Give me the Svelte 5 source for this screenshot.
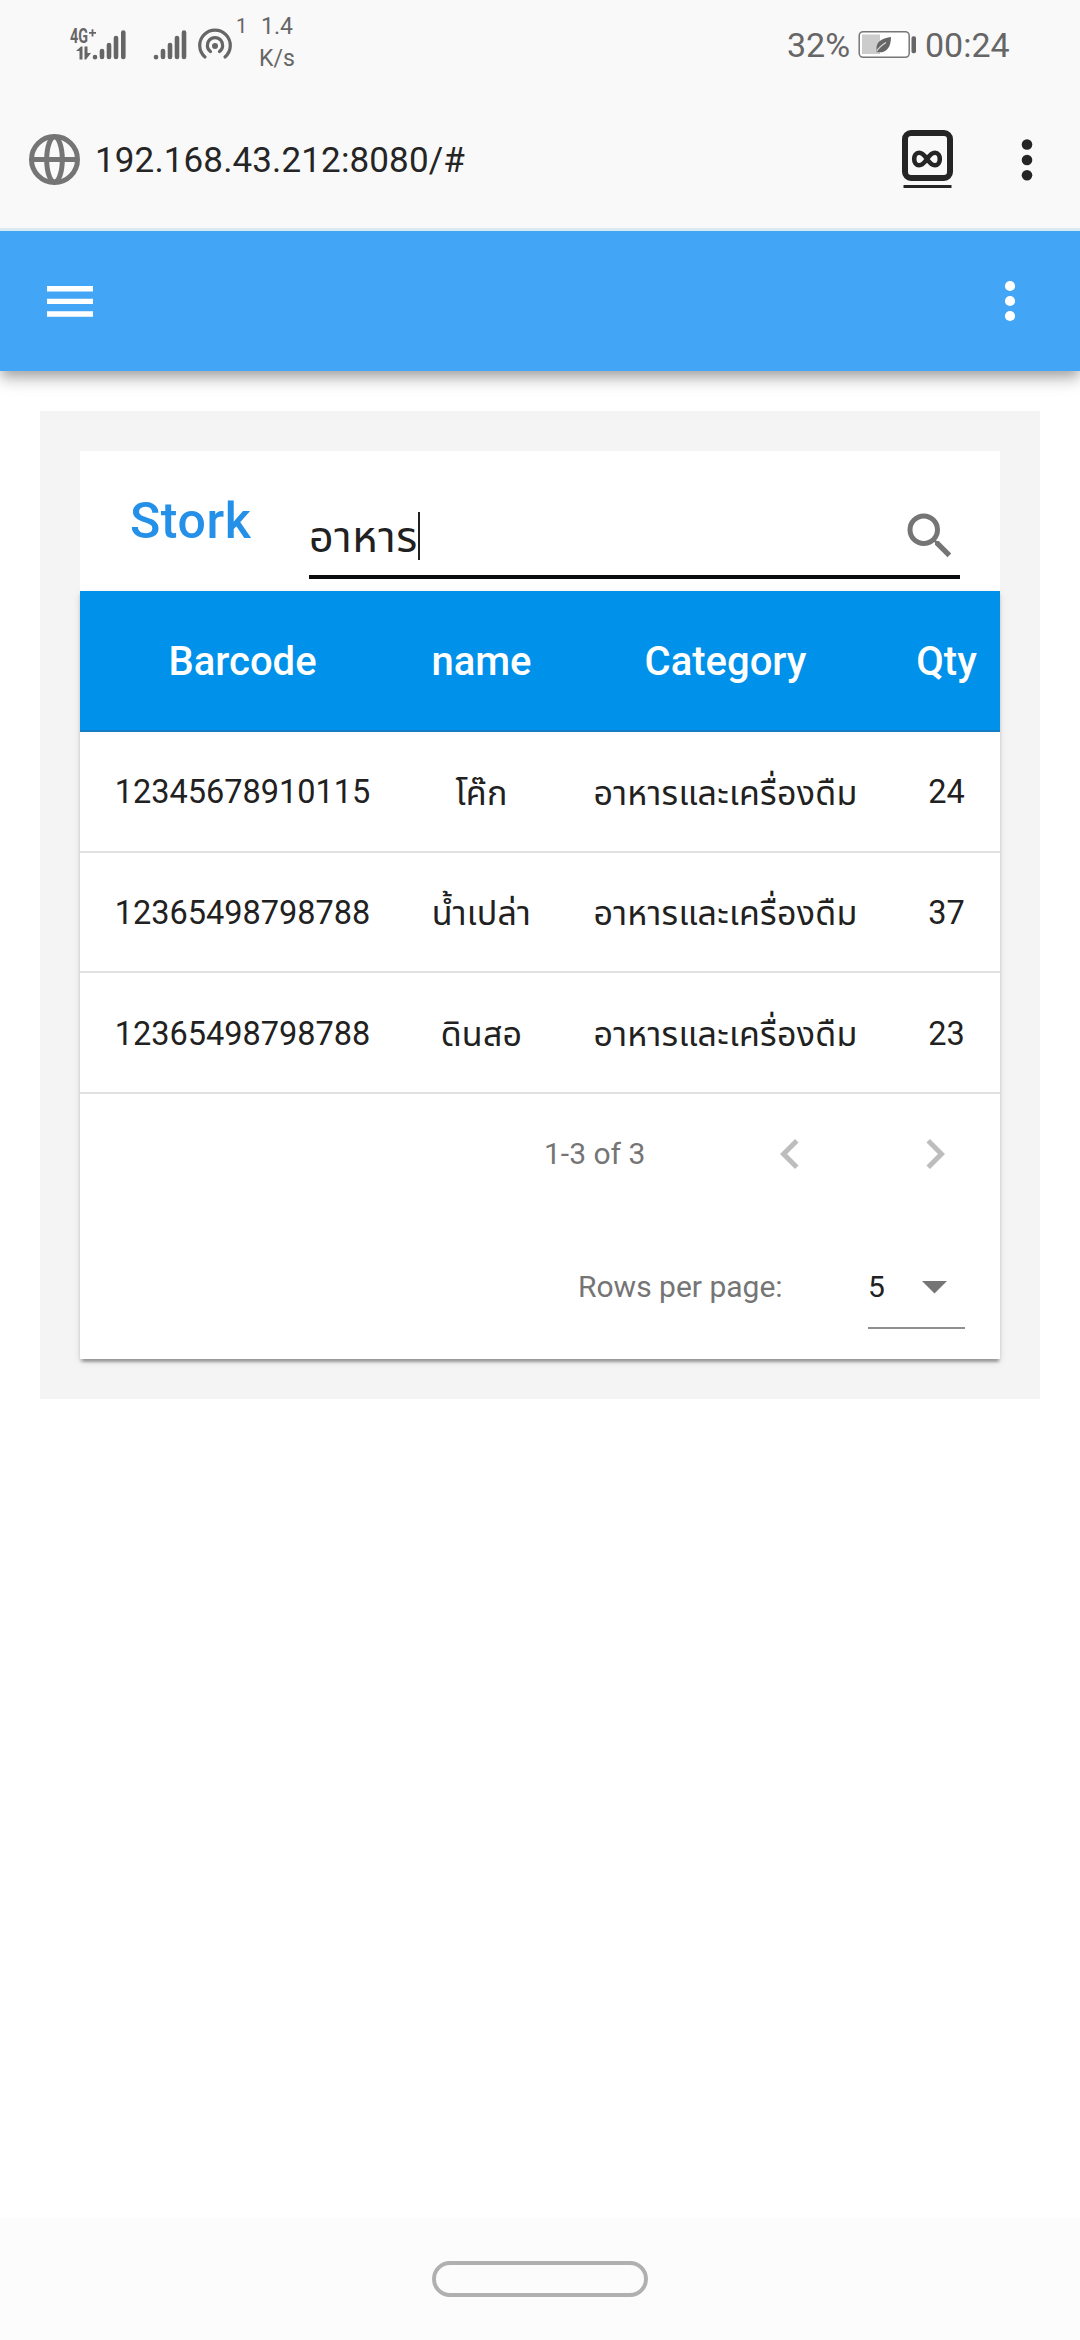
<script>
  const columns = ['Barcode', 'name', 'Category', 'Qty'];
  const rows = [
    { barcode: '12345678910115', name: 'โค๊ก', category: 'อาหารและเครื่องดืม', qty: 24 },
    { barcode: '12365498798788', name: 'น้ำเปล่า', category: 'อาหารและเครื่องดืม', qty: 37 },
    { barcode: '12365498798788', name: 'ดินสอ', category: 'อาหารและเครื่องดืม', qty: 23 }
  ];
  const query = 'อาหาร';
</script>

<div class="screen">
  <header class="status">
    <svg class="cell-signal" width="57" height="44" viewBox="0 -8 57 44">
      <g fill="#666">
        <text x="0" y="17" class="net" textLength="18" lengthAdjust="spacingAndGlyphs">4G</text>
        <path d="M19 6h2.600V3.200h1.800V6H26v1.800h-2.600v2.700h-1.800V7.800H19z" />
        <path d="M6 25l5-4.500h1.500V33.500H9.500V25zM14.500 20.500h3v6.500H21l-5 6.500h-1.500z" />
      </g>
      <g stroke="#666" stroke-width="4.600" stroke-linecap="round">
        <path d="M25 31v.200M32 25v6M39 19v12M46 12v19M53.300 6.500V31" />
      </g>
    </svg>
    <svg class="sim2" width="34" height="36" viewBox="0 0 34 36">
      <path d="M3 31v.200M10 25v6M17 19v12M24 12v19M31 6.500V31" stroke="#666" stroke-width="4.600" stroke-linecap="round" />
    </svg>
    <svg class="hotspot" width="36" height="36" viewBox="0 0 36 36">
      <circle cx="18" cy="20" r="3" fill="#666" />
      <g fill="none" stroke="#666" stroke-width="3.200" stroke-linecap="round">
        <path d="M13.500 25.500a7.700 7.700 0 1 1 9 0" />
        <path d="M8 31a15.300 15.300 0 1 1 20 0" />
      </g>
    </svg>
    <span class="clients">1</span>
    <span class="speed"><span>1.4</span><span>K/s</span></span>
    <span class="percent">32%</span>
    <svg class="battery" width="60" height="30" viewBox="0 0 60 30">
      <rect x="1.200" y="1.700" width="50" height="25.600" rx="4" fill="#fff" stroke="#777" stroke-width="1.500" />
      <rect x="4" y="4.500" width="18" height="19.500" fill="#ccc" />
      <path d="M33 7C25 8 18 11 18.500 19.500L18 22l2 .3C28 23 33 18 33 7z" fill="#666" />
      <path d="M18.500 21.500C21 17 24 15 28 12.500" fill="none" stroke="#ddd" stroke-width="1.100" />
      <rect x="53.500" y="6.300" width="4.500" height="17" rx="1.800" fill="#666" />
    </svg>
    <span class="clock">00:24</span>
  </header>

  <div class="browser">
    <svg class="globe" width="52" height="52" viewBox="0 0 52 52" fill="none" stroke="#757575">
      <circle cx="26.500" cy="26.500" r="23" stroke-width="5" />
      <ellipse cx="26.500" cy="26.500" rx="7.800" ry="22.500" stroke-width="5" />
      <path d="M3 26.500h47" stroke-width="5" />
    </svg>
    <span class="url">192.168.43.212:8080/#</span>
    <svg class="tabs" width="52" height="60" viewBox="0 0 52 60" fill="none" stroke="#252525">
      <rect x="3" y="3" width="45" height="45" rx="6" stroke-width="6" />
      <path d="M25 29C22 24.500 20 22.700 17 22.700c-3 0-4.800 2.800-4.800 6.300s1.800 6.300 4.800 6.300c3 0 5-1.800 8-6.300s5-6.300 8-6.300 4.800 2.800 4.800 6.300-1.800 6.300-4.800 6.300-5-1.800-8-6.300z" stroke-width="4.600" />
      <path d="M1.500 56.500h48" stroke-width="3" />
    </svg>
    <svg class="more" width="12" height="44" viewBox="0 0 12 44" fill="#252525">
      <circle cx="6" cy="6.500" r="5.300" /><circle cx="6" cy="22" r="5.300" /><circle cx="6" cy="37.300" r="5.300" />
    </svg>
  </div>

  <nav class="appbar">
    <svg width="46" height="31" viewBox="0 0 46 31" fill="#fff">
      <path d="M0 0h46v5.500H0zM0 12.700h46v5.300H0zM0 25.200h46v5.500H0z" />
    </svg>
    <svg width="12" height="42" viewBox="0 0 12 42" fill="#fff">
      <circle cx="6" cy="6" r="5.100" /><circle cx="6" cy="21" r="5.100" /><circle cx="6" cy="36" r="5.100" />
    </svg>
  </nav>

  <main class="panel">
    <div class="toolbar">
      <h1>Stork</h1>
      <div class="search">
        <span class="query">{query}</span><i class="caret"></i>
        <svg width="60" height="60" viewBox="0 0 24 24" fill="#757575">
          <path d="M15.500 14h-.790l-.280-.270A6.471 6.471 0 0 0 16 9.500 6.500 6.500 0 1 0 9.500 16c1.610 0 3.090-.590 4.230-1.570l.270.280v.790l5 4.990L20.490 19l-4.990-5zm-6 0C7.010 14 5 11.990 5 9.500S7.010 5 9.500 5 14 7.010 14 9.500 11.990 14 9.500 14z" />
        </svg>
      </div>
    </div>

    <section class="card">
      <div class="row head">
        {#each columns as column}<span>{column}</span>{/each}
      </div>
      {#each rows as row}
        <div class="row">
          <span>{row.barcode}</span>
          <span class="thai">{row.name}</span>
          <span class="thai">{row.category}</span>
          <span>{row.qty}</span>
        </div>
      {/each}
      <div class="pager">
        <span class="range">1-3 of 3</span>
        <svg class="prev" width="60" height="60" viewBox="0 0 24 24" fill="#bdbdbd"><path d="M15.410 16.590L10.830 12l4.580-4.590L14 6l-6 6 6 6z" /></svg>
        <svg class="next" width="60" height="60" viewBox="0 0 24 24" fill="#bdbdbd"><path d="M8.590 16.590L13.170 12 8.590 7.410 10 6l6 6-6 6z" /></svg>
      </div>
      <div class="per-page">
        <span class="label">Rows per page:</span>
        <div class="select">
          <span>5</span>
          <svg width="25" height="13" viewBox="0 0 25 13"><path d="M0 0h25L12.500 12.500z" fill="#757575" /></svg>
        </div>
      </div>
    </section>
  </main>

  <footer class="gestures"><div class="pill"></div></footer>
</div>

<style>
  :global(body) { margin: 0; background: #fff; }
  .screen {
    width: 1080px; height: 2340px; display: flex; flex-direction: column; overflow: hidden;
    background: #fff; color: #212121; font-family: Roboto, 'Noto Sans Thai', 'Noto Sans', sans-serif;
  }
  svg { display: block; flex: none; }
  .status { height: 90px; box-sizing: border-box; display: flex; align-items: flex-start; background: #f9f9f9; color: #666; white-space: nowrap; }
  .net { font: 700 20px Roboto, sans-serif; }
  .cell-signal { margin: 18px 0 0 70px; }
  .sim2 { margin: 26px 0 0 26px; }
  .hotspot { margin: 26px 0 0 10px; }
  .clients { margin: 14px 0 0 3px; width: 22px; font-size: 20px; line-height: 24px; }
  .speed { display: flex; flex-direction: column; align-items: center; width: 34px; margin: 11px 0 0 2px; font-size: 23px; line-height: 32px; }
  .percent { margin: 25px 0 0 493px; width: 71px; font-size: 34px; line-height: 40px; }
  .battery { margin: 30px 0 0 0; }
  .clock { margin: 25px 0 0 7px; font-size: 34px; line-height: 40px; }
  .browser { height: 138px; display: flex; align-items: flex-start; background: #f9f9f9; border-bottom: 3px solid #d9ebf1; }
  .globe { margin: 43px 0 0 28px; }
  .url { margin: 51px 0 0 15px; width: 807px; font-size: 35px; line-height: 40px; color: #252525; letter-spacing: 0.13px; }
  .tabs { margin-top: 40px; }
  .more { margin: 48px 0 0 67px; }
  .appbar {
    height: 140px; box-sizing: border-box; padding: 0 64px 0 47px; display: flex; flex: none; align-items: center; justify-content: space-between;
    background: #42a5f5; box-shadow: 0 5px 10px -2.5px rgba(0, 0, 0, .2), 0 10px 12.5px rgba(0, 0, 0, .14), 0 2.5px 25px rgba(0, 0, 0, .12);
    clip-path: inset(0 0 -50px 0);
  }
  .panel { margin: 40px 40px 0; padding: 40px; height: 988px; box-sizing: border-box; background: #f4f4f4; }
  .toolbar { height: 140px; display: flex; box-sizing: border-box; padding: 0 40px 0 50px; background: #fff; }
  h1 { margin: 41px 0 0; width: 179px; font-size: 50px; font-weight: 500; line-height: 58px; letter-spacing: .6px; color: #2490e8; }
  .search { flex: 1; height: 128px; box-sizing: border-box; padding-top: 55px; display: flex; align-items: flex-start; border-bottom: 4px solid #0a0c0e; }
  .query { margin-top: 6px; font-size: 43px; line-height: 50px; letter-spacing: .6px; }
  .caret { width: 2px; height: 48px; margin-top: 6px; background: #212121; }
  .search svg { margin-left: auto; }
  .card { height: 768px; background: #fff; box-shadow: 0 5px 2.5px -2.5px rgba(0, 0, 0, .2), 0 2.5px 2.5px rgba(0, 0, 0, .14), 0 2.5px 7.5px rgba(0, 0, 0, .12); }
  .row {
    height: 120.670px; box-sizing: border-box; padding-top: 2px; border-bottom: 2px solid #e0e0e0; display: grid;
    grid-template-columns: 325px 153px 335px 107px; align-items: center; text-align: center; font-size: 32.500px; white-space: nowrap;
  }
  .thai { padding-top: 4px; font-size: 34px; letter-spacing: .25px; }
  .head { height: 141px; background: #0091ea; border-color: #147dc4; color: #fff; font-size: 40px; font-weight: 500; }
  .pager, .per-page { display: flex; align-items: center; font-size: 30px; color: #757575; }
  .pager { height: 121px; padding-left: 464px; }
  .range { width: 216px; padding-bottom: 1px; }
  .next { margin-left: 85px; }
  .per-page { height: 143px; align-items: flex-start; padding-left: 498px; }
  .label { width: 290px; margin-top: 54px; line-height: 36px; }
  .select { width: 97px; height: 114px; box-sizing: border-box; border-bottom: 2px solid #8f8f8f; padding: 54px 18px 0 0; display: flex; justify-content: space-between; line-height: 36px; color: #212121; }
  .select svg { margin-top: 12px; }
  .gestures { height: 122px; margin-top: auto; flex: none; background: #fcfcfc; display: flex; justify-content: center; align-items: flex-start; }
  .pill { width: 216px; height: 36px; margin-top: 43px; box-sizing: border-box; border: 4.500px solid #b0b0b0; border-radius: 18px; }
</style>
